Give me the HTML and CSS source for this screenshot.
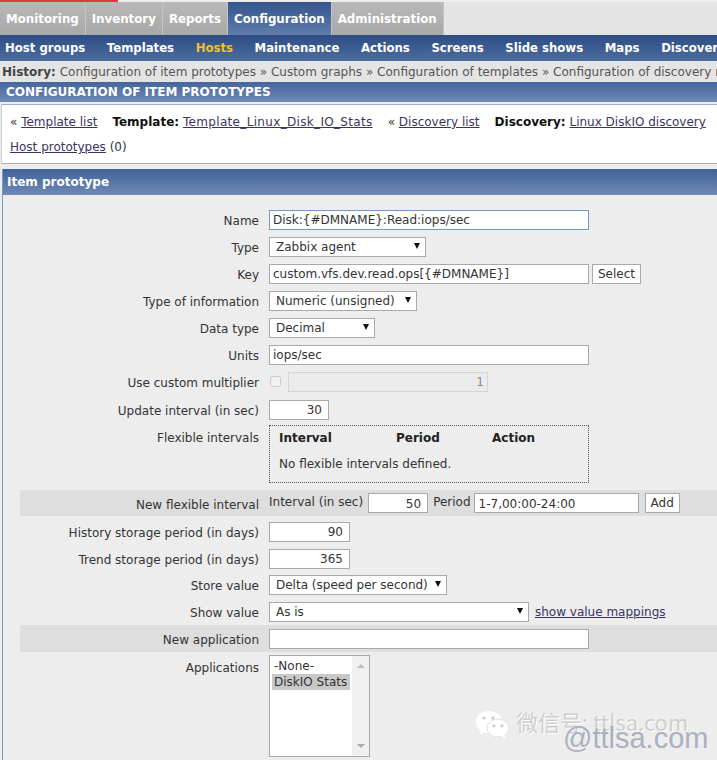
FILE: index.html
```html
<!DOCTYPE html>
<html lang="en">
<head>
    <meta charset="UTF-8">
    <meta name="viewport" content="width=device-width, initial-scale=1.0">
    <title>Configuration of item prototypes</title>
    <link rel="stylesheet" href="styles.css">
</head>
<body>
    <div class="loadbar"></div>

    <nav class="tabs">
        <a class="tab">Monitoring</a>
        <a class="tab">Inventory</a>
        <a class="tab">Reports</a>
        <a class="tab active">Configuration</a>
        <a class="tab">Administration</a>
    </nav>

    <nav class="subnav">
        <a>Host groups</a>
        <a>Templates</a>
        <a class="current">Hosts</a>
        <a>Maintenance</a>
        <a>Actions</a>
        <a>Screens</a>
        <a>Slide shows</a>
        <a>Maps</a>
        <a>Discovery</a>
    </nav>

    <div class="history">
        <b>History:</b> <a>Configuration of item prototypes</a> <i>»</i> <a>Custom graphs</a> <i>»</i> <a>Configuration of templates</a> <i>»</i> <a>Configuration of discovery rules</a>
    </div>

    <h1 class="page-title">CONFIGURATION OF ITEM PROTOTYPES</h1>

    <div class="breadcrumbs">
        <div class="crumb-row">
            <span><i>«</i> <a href="#">Template list</a></span>
            <span><b>Template:</b> <a class="wide" href="#">Template_Linux_Disk_IO_Stats</a></span>
            <span><i>«</i> <a href="#">Discovery list</a></span>
            <span><b>Discovery:</b> <a href="#">Linux DiskIO discovery</a></span>
        </div>
        <div class="crumb-row second">
            <span><a href="#">Host prototypes</a> (0)</span>
        </div>
    </div>

    <section class="panel">
        <h2 class="panel-title">Item prototype</h2>
        <form class="item-form">
            <div class="row">
                <label>Name</label>
                <input class="field w320 focused" type="text" value="Disk:{#DMNAME}:Read:iops/sec">
            </div>
            <div class="row">
                <label>Type</label>
                <div class="select w157"><select><option>Zabbix agent</option></select></div>
            </div>
            <div class="row">
                <label>Key</label>
                <input class="field w320" type="text" value="custom.vfs.dev.read.ops[{#DMNAME}]">
                <button class="btn" type="button">Select</button>
            </div>
            <div class="row">
                <label>Type of information</label>
                <div class="select w148"><select><option>Numeric (unsigned)</option></select></div>
            </div>
            <div class="row">
                <label>Data type</label>
                <div class="select w106"><select><option>Decimal</option></select></div>
            </div>
            <div class="row">
                <label>Units</label>
                <input class="field w320" type="text" value="iops/sec">
            </div>
            <div class="row">
                <label>Use custom multiplier</label>
                <input class="check" type="checkbox" disabled>
                <input class="field w200 num disabled" type="text" value="1" disabled>
            </div>
            <div class="row update-row">
                <label>Update interval (in sec)</label>
                <input class="field w60 num" type="text" value="30">
            </div>
            <div class="row top flex-row">
                <label>Flexible intervals</label>
                <div class="intervals">
                    <div class="interval-head">
                        <b>Interval</b>
                        <b>Period</b>
                        <b>Action</b>
                    </div>
                    <p>No flexible intervals defined.</p>
                </div>
            </div>
            <div class="row shaded new-interval">
                <label>New flexible interval</label>
                <span class="inline-label">Interval (in sec)</span>
                <input class="field w60 num" type="text" value="50">
                <span class="inline-label">Period</span>
                <input class="field w165" type="text" value="1-7,00:00-24:00">
                <button class="btn" type="button">Add</button>
            </div>
            <div class="row history-row">
                <label>History storage period (in days)</label>
                <input class="field w81 num" type="text" value="90">
            </div>
            <div class="row">
                <label>Trend storage period (in days)</label>
                <input class="field w81 num" type="text" value="365">
            </div>
            <div class="row store-row">
                <label>Store value</label>
                <div class="select w178"><select><option>Delta (speed per second)</option></select></div>
            </div>
            <div class="row">
                <label>Show value</label>
                <div class="select w260"><select><option>As is</option></select></div>
                <a class="mapping" href="#">show value mappings</a>
            </div>
            <div class="row shaded">
                <label>New application</label>
                <input class="field w320" type="text">
            </div>
            <div class="row top apps-row">
                <label>Applications</label>
                <div class="listbox">
                    <ul>
                        <li>-None-</li>
                        <li class="selected">DiskIO Stats</li>
                    </ul>
                    <div class="scroll"><span class="up"></span><span class="down"></span></div>
                </div>
            </div>
        </form>
    </section>

    <!-- watermark from the original picture -->
    <div class="watermark">
        <svg class="wechat" width="36" height="30" viewBox="0 0 36 30">
            <ellipse cx="14" cy="12" rx="13" ry="11" fill="#fff"/>
            <path d="M6 19 L5 25 L12 21 Z" fill="#fff"/>
            <ellipse cx="23" cy="18" rx="11" ry="9" fill="#fff" stroke="#e2e2e2"/>
            <path d="M29 24 L32 29 L25 26 Z" fill="#fff"/>
            <circle cx="9" cy="8" r="1.6" fill="#c8c8c8"/>
            <circle cx="18" cy="8" r="1.6" fill="#c8c8c8"/>
            <circle cx="19" cy="16" r="1.4" fill="#c8c8c8"/>
            <circle cx="27" cy="16" r="1.4" fill="#c8c8c8"/>
        </svg>
        <span class="wm-cn">微信号: ttlsa.com</span>
        <span class="wm-en">@ttlsa.com</span>
    </div>
</body>
</html>
```
FILE: styles.css
```css
body {
    font-family: "DejaVu Sans", Verdana, sans-serif;
    font-size: 12px;
    margin: 0;
    height: 760px;
    overflow: hidden;
    position: relative;
    background-color: #ededed;
    color: #333;
}

a[href] {
    color: #3a3560;
}

.loadbar {
    width: 118px;
    height: 2px;
    background-color: #e8343a;
}

/* top tabs */
.tabs {
    display: flex;
    height: 33px;
    background-color: #e4e4e4;
}

.tab {
    display: flex;
    align-items: center;
    padding: 0 6px;
    font-size: 11.8px;
    font-weight: bold;
    color: #fff;
    background: linear-gradient(#b9b9b9, #a8a8a8);
    border-right: 1px solid #c4c4c4;
}

.tab.active {
    background: linear-gradient(#34558c, #5f7dac);
}

/* second menu row */
.subnav {
    display: flex;
    align-items: center;
    gap: 21.6px;
    height: 26px;
    padding-left: 5px;
    white-space: nowrap;
    overflow: hidden;
    font-size: 11.7px;
    font-weight: bold;
    color: #fff;
    background: linear-gradient(#2d4d84, #4d6c9f);
}

.subnav .current {
    color: #f0c030;
}

.history {
    height: 21px;
    line-height: 23px;
    padding-left: 2px;
    white-space: nowrap;
    overflow: hidden;
    color: #555;
    background-color: #e4e4e4;
}

.history b {
    color: #444;
}

.history i, .breadcrumbs i {
    font-style: normal;
}

.page-title {
    margin: 0;
    height: 20px;
    line-height: 21px;
    padding-left: 6px;
    font-size: 12px;
    color: #fff;
    background: linear-gradient(#44669d, #7089b5);
}

.breadcrumbs {
    margin-top: 2px;
    margin-left: 1px;
    height: 60px;
    box-sizing: border-box;
    border-top: 1px solid #9eb0c8;
    border-bottom: 1px solid #a8b4b4;
    border-left: 1px solid #c8d0d8;
    padding: 9px 9px 0 8px;
    background-color: #fff;
}

.crumb-row {
    display: flex;
    gap: 15px;
    line-height: 16px;
    white-space: nowrap;
}

.crumb-row b {
    color: #111;
}

.crumb-row .wide {
    letter-spacing: 0.33px;
}

.crumb-row.second {
    margin-top: 9px;
}

.panel {
    margin-top: 5px;
    margin-left: 2px;
    border-left: 1px solid #7f98bd;
}

.panel-title {
    margin: 0;
    height: 26px;
    line-height: 27px;
    padding-left: 4px;
    font-size: 12px;
    color: #fff;
    background: linear-gradient(#3f6299, #7089b5);
}

/* form rows */
.item-form {
    padding: 11px 0 20px;
}

.row {
    display: flex;
    align-items: center;
    min-height: 27px;
}

.row label {
    flex: none;
    width: 256px;
    text-align: right;
    margin-right: 10px;
    padding-top: 3px;
}

.row.top {
    align-items: flex-start;
}

.row.top label {
    padding-top: 6px;
}

.row.shaded {
    margin-left: 17px;
    background-color: #dedede;
}

.row.shaded label {
    width: 239px;
}

.field {
    box-sizing: border-box;
    height: 20px;
    padding: 1px 3px 0;
    border: 1px solid #a9a9a9;
    background-color: #fff;
    color: #333;
    font: inherit;
    outline: none;
}

.field.focused {
    border-color: #6f9ccf;
}

.field.num {
    text-align: right;
    padding-right: 6px;
}

.field.disabled {
    background-color: #ebebeb;
    border-color: #d4d4d4;
    color: #888;
    padding-right: 3px;
}

.w60 { width: 60px; }
.w81 { width: 81px; }
.w106 { width: 106px; }
.w148 { width: 148px; }
.w157 { width: 157px; }
.w165 { width: 165px; padding-left: 4px; margin-left: -2px; }
.w178 { width: 178px; }
.w200 { width: 200px; }
.w260 { width: 260px; }
.w320 { width: 320px; }

.select {
    position: relative;
    box-sizing: border-box;
    height: 20px;
}

.select select {
    appearance: none;
    box-sizing: border-box;
    width: 100%;
    height: 20px;
    padding: 1px 6px 0;
    border: 1px solid #a9a9a9;
    border-radius: 0;
    background-color: #fff;
    color: #333;
    font: inherit;
}

.select::after {
    content: "";
    position: absolute;
    right: 6px;
    top: 6px;
    border-left: 3.5px solid transparent;
    border-right: 3.5px solid transparent;
    border-top: 6px solid #111;
}

.btn {
    box-sizing: border-box;
    height: 20px;
    margin-left: 3px;
    padding: 0 5px;
    border: 1px solid #a9a9a9;
    background-color: #fff;
    color: #333;
    font: inherit;
}

.check {
    width: 11px;
    height: 11px;
    margin: 0 7px 0 1px;
}

.update-row {
    margin-top: 1px;
}

.intervals {
    box-sizing: border-box;
    width: 320px;
    height: 58px;
    padding: 4px 9px;
    border: 1px dotted #555;
}

.interval-head {
    display: flex;
    line-height: 16px;
}

.interval-head b {
    flex: none;
    width: 117px;
    color: #222;
}

.interval-head b + b {
    width: 96px;
}

.intervals p {
    margin: 10px 0 0;
    line-height: 16px;
}

.flex-row {
    min-height: 61px;
    padding-top: 2px;
}

.new-interval {
    margin-top: 4px;
    min-height: 26px;
    gap: 5px;
}

.new-interval label {
    margin-right: 5px;
    padding-top: 4px;
}

.new-interval .btn {
    margin-left: 1px;
}

.inline-label {
    margin-top: -2px;
}

.history-row {
    margin-top: 2px;
}

.store-row {
    margin-top: -1px;
}

.mapping {
    margin-left: 6px;
}

.apps-row {
    padding-top: 3px;
}

.listbox {
    display: flex;
    box-sizing: border-box;
    width: 101px;
    height: 102px;
    border: 1px solid #a9a9a9;
    background-color: #fff;
}

.listbox ul {
    flex: 1;
    margin: 0;
    padding: 2px 2px 0;
    list-style: none;
}

.listbox li {
    line-height: 16px;
    padding-left: 2px;
}

.listbox li.selected {
    background-color: #c8c8c8;
}

.scroll {
    display: flex;
    flex-direction: column;
    justify-content: space-between;
    align-items: center;
    width: 17px;
    padding: 8px 0;
    box-sizing: border-box;
    background-color: #f0f0f0;
}

.scroll .up {
    border-left: 4px solid transparent;
    border-right: 4px solid transparent;
    border-bottom: 4px solid #bbb;
}

.scroll .down {
    border-left: 4px solid transparent;
    border-right: 4px solid transparent;
    border-top: 4px solid #aaa;
}

/* sits over the form */
.watermark {
    position: absolute;
    left: 475px;
    top: 708px;
    width: 242px;
    height: 52px;
}

.wechat {
    position: absolute;
    left: 0;
    top: 2px;
}

.wm-cn {
    position: absolute;
    left: 41px;
    top: -3px;
    font-family: "Noto Sans CJK SC", "DejaVu Sans", sans-serif;
    font-size: 22px;
    color: #cfcfcf;
    text-shadow: 1px 1px 0 #fff;
    white-space: nowrap;
}

.wm-en {
    position: absolute;
    left: 88px;
    top: 14px;
    font-family: "Liberation Sans", Arial, sans-serif;
    font-size: 29px;
    color: #abb0c0;
    white-space: nowrap;
}
```
